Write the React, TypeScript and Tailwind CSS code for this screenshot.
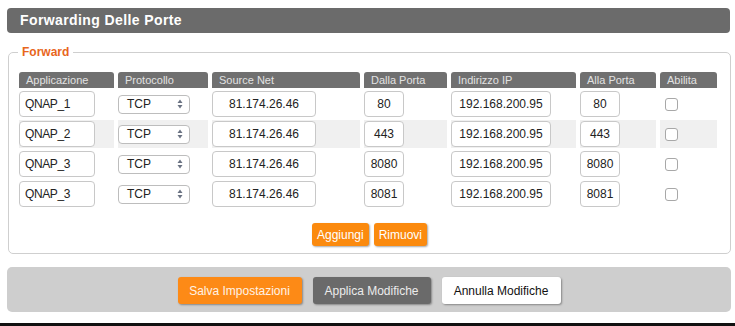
import React from 'react';

const FONT = { fontFamily: '"Liberation Sans", Arial, sans-serif' };

const rows = [
  { app: 'QNAP_1', src: '81.174.26.46', from: '80', ip: '192.168.200.95', to: '80' },
  { app: 'QNAP_2', src: '81.174.26.46', from: '443', ip: '192.168.200.95', to: '443' },
  { app: 'QNAP_3', src: '81.174.26.46', from: '8080', ip: '192.168.200.95', to: '8080' },
  { app: 'QNAP_3', src: '81.174.26.46', from: '8081', ip: '192.168.200.95', to: '8081' },
];

const headers = ['Applicazione', 'Protocollo', 'Source Net', 'Dalla Porta', 'Indirizzo IP', 'Alla Porta', 'Abilita'];

const SelectArrows = () => (
  <svg width="6" height="10" viewBox="0 0 6 10" className="text-gray-500">
    <path d="M3 0.5 L5.5 4 L0.5 4 Z" fill="currentColor" />
    <path d="M3 9.5 L5.5 6 L0.5 6 Z" fill="currentColor" />
  </svg>
);

const Field: React.FC<{ value: string; className: string; center?: boolean }> = ({ value, className, center }) => (
  <div
    className={`h-[26px] border border-[#c8c8c8] rounded-[4px] bg-white flex items-center text-[12px] text-[#222] ${center ? 'justify-center' : 'pl-[5px]'} ${className}`}
  >
    {value}
  </div>
);

export default function App() {
  return (
    <div className="w-[735px] h-[326px] bg-white relative overflow-hidden" style={FONT}>
      <div className="pt-[8px]">
        {/* Title */}
        <div className="ml-[7px] w-[723px] h-[25px] bg-[#6b6b6b] rounded-[4px] flex items-center pl-[13px]">
          <span className="text-white text-[14px] font-bold tracking-[0.4px]">Forwarding Delle Porte</span>
        </div>

        {/* Forward fieldset */}
        <fieldset className="ml-[8px] mt-[12px] w-[723px] border border-[#cfcfcf] rounded-[5px] pl-[6px] pr-0 pt-[11px] pb-[7px]">
          <legend className="ml-[3px] px-[4px] text-[12px] leading-[14px] font-bold text-[#e8661c]">Forward</legend>

          <div className="grid grid-cols-[95px_90px_148px_83px_125px_76px_57px] gap-x-[4px] gap-y-[2px] mt-[2px] ml-[4px]">
            {headers.map((h) => (
              <div key={h} className="h-[16px] bg-[#707070] rounded-t-[3px] text-[#e2e2e2] text-[11px] leading-[16px] pl-[7px]">
                {h}
              </div>
            ))}
            {rows.map((r, i) => {
              const bg = i === 1 ? 'bg-[#f0f0f0]' : 'bg-white';
              return (
                <React.Fragment key={i}>
                  <div className={`h-[28px] flex items-center ${bg}`}>
                    <Field value={r.app} className="w-[76px] tracking-[-0.4px]" />
                  </div>
                  <div className={`h-[28px] flex items-center ${bg}`}>
                    <div className="w-[72px] h-[19px] border border-[#bdbdbd] rounded-[4px] bg-white flex items-center justify-between pl-[8px] pr-[6px] text-[12px] text-[#222]">
                      <span>TCP</span>
                      <SelectArrows />
                    </div>
                  </div>
                  <div className={`h-[28px] flex items-center ${bg}`}>
                    <Field value={r.src} className="w-[104px]" center />
                  </div>
                  <div className={`h-[28px] flex items-center ${bg}`}>
                    <Field value={r.from} className="w-[40px]" center />
                  </div>
                  <div className={`h-[28px] flex items-center ${bg}`}>
                    <Field value={r.ip} className="w-[100px]" center />
                  </div>
                  <div className={`h-[28px] flex items-center ${bg}`}>
                    <Field value={r.to} className="w-[40px]" center />
                  </div>
                  <div className={`h-[28px] flex items-center pl-[5px] ${bg}`}>
                    <div className="w-[13px] h-[13px] border border-[#a8a8a8] rounded-[3px] bg-white" />
                  </div>
                </React.Fragment>
              );
            })}
          </div>

          <div className="flex justify-center gap-[5px] mt-[15px] pr-[6px]">
            <button className="h-[23px] px-[5px] bg-[#fb8a0e] text-white text-[12px] rounded-[3px] shadow-[1px_1px_2px_rgba(0,0,0,0.35)]">
              Aggiungi
            </button>
            <button className="h-[23px] px-[5px] bg-[#fb8a0e] text-white text-[12px] rounded-[3px] shadow-[1px_1px_2px_rgba(0,0,0,0.35)]">
              Rimuovi
            </button>
          </div>
        </fieldset>

        {/* Action panel */}
        <div className="ml-[7px] mt-[13px] w-[724px] h-[45px] bg-[#cecece] rounded-[5px] flex justify-center items-start pt-[10px] gap-[11px]">
          <button className="w-[124px] h-[27px] bg-[#fd8a16] text-[#fff3e6] text-[12px] rounded-[3px] shadow-[1px_1px_2px_rgba(0,0,0,0.35)]">
            Salva Impostazioni
          </button>
          <button className="w-[118px] h-[27px] bg-[#6a6a6a] text-[#ececec] text-[12px] rounded-[3px] shadow-[1px_1px_2px_rgba(0,0,0,0.35)]">
            Applica Modifiche
          </button>
          <button className="w-[119px] h-[27px] bg-white text-[#111] text-[12px] rounded-[3px] shadow-[1px_1px_2px_rgba(0,0,0,0.35)]">
            Annulla Modifiche
          </button>
        </div>
      </div>
      <div className="absolute left-0 right-0 bottom-0 h-[3px] bg-[#111]" />
    </div>
  );
}
